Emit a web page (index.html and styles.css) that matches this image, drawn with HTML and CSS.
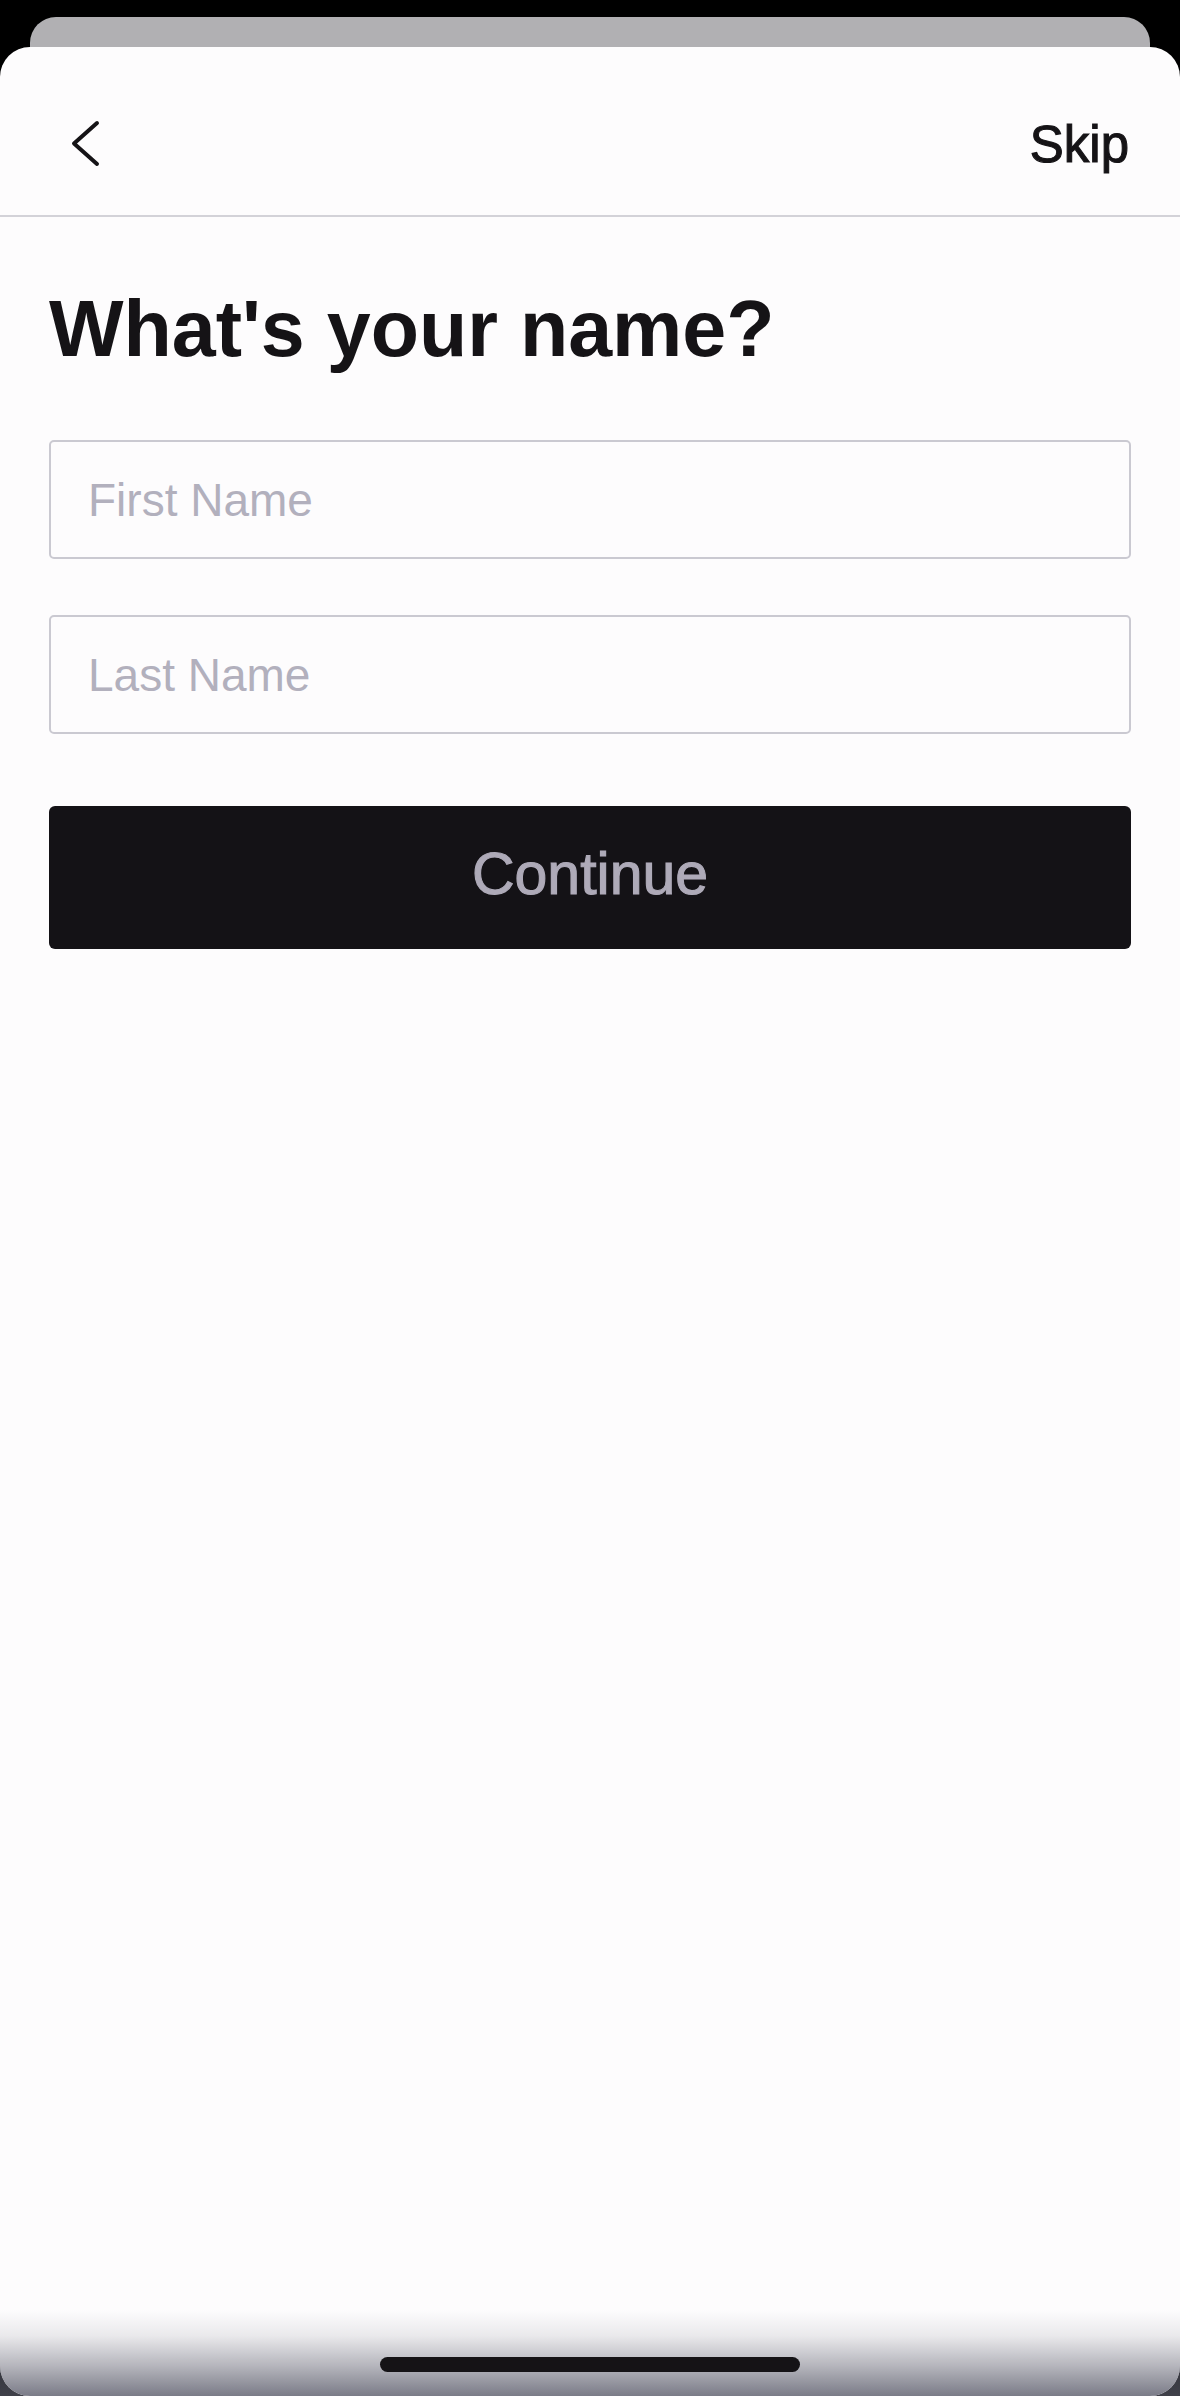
FILE: index.html
```html
<!DOCTYPE html>
<html lang="en">
<head>
  <meta charset="UTF-8" />
  <meta name="viewport" content="width=device-width, initial-scale=1" />
  <title>What's your name?</title>
  <link rel="stylesheet" href="styles.css">
</head>
<body>
  <div class="screen">
    <div class="card-behind"></div>
    <div class="sheet">
      <header class="topbar">
        <button class="back" type="button" aria-label="Back">
          <svg width="32" height="48" viewBox="0 0 32 48" fill="none">
            <path d="M27 3 L4 23.5 L27 44" stroke="#151316" stroke-width="4" stroke-linecap="round" stroke-linejoin="round"/>
          </svg>
        </button>
        <button class="skip" type="button">Skip</button>
      </header>

      <form class="content" id="nameForm">
        <h1>What's your name?</h1>
        <input class="field" type="text" name="first" placeholder="First Name" />
        <input class="field" type="text" name="last" placeholder="Last Name" />
        <button class="continue" type="submit">Continue</button>
      </form>

      <div class="home-area">
        <div class="home-indicator"></div>
      </div>
    </div>
  </div>
</body>
</html>
```

FILE: styles.css
```css
html, body {
  height: 100%;
  margin: 0;
}
body {
  background: linear-gradient(to bottom, #000 92%, #3f4049 100%);
  font-family: "Liberation Sans", Arial, sans-serif;
  color: #151316;
}
.screen {
  display: flex;
  flex-direction: column;
  height: 100%;
  padding-top: 17px;
  box-sizing: border-box;
}
.card-behind {
  height: 30px;
  margin: 0 30px;
  background: #b1b0b3;
  border-radius: 26px 26px 0 0;
  flex-shrink: 0;
}
.sheet {
  flex: 1;
  display: flex;
  flex-direction: column;
  background: #fdfcfd;
  border-radius: 30px;
  overflow: hidden;
}

/* top bar */
.topbar {
  height: 170px;
  box-sizing: border-box;
  padding: 26px 51px 0 70px;
  display: flex;
  justify-content: space-between;
  align-items: center;
  border-bottom: 2px solid #d3d2d8;
}
.topbar button {
  background: none;
  border: none;
  padding: 0;
  cursor: pointer;
  font-family: inherit;
  color: #151316;
}
.back svg {
  display: block;
}
.skip {
  font-size: 51px;
  -webkit-text-stroke: 1.1px #151316;
}

/* form */
.content {
  display: flex;
  flex-direction: column;
  padding: 0 49px;
}
h1 {
  margin: 65px 0 64px;
  font-size: 79px;
  line-height: 94px;
  font-weight: bold;
  letter-spacing: 0;
}
.field {
  height: 119px;
  box-sizing: border-box;
  border: 2px solid #cac9d1;
  border-radius: 5px;
  background: #fdfcfd;
  padding: 0 37px;
  font-family: inherit;
  font-size: 46px;
  color: #151316;
  outline: none;
}
.field::placeholder {
  color: #b2b0bd;
}
.field + .field {
  margin-top: 56px;
}
.continue {
  margin-top: 72px;
  height: 143px;
  box-sizing: border-box;
  padding: 0 0 8px;
  border: none;
  border-radius: 6px;
  background: #141216;
  color: #aeaab8;
  font-family: inherit;
  font-size: 59px;
  -webkit-text-stroke: 1.1px #aeaab8;
  cursor: pointer;
}

/* bottom fade with home indicator */
.home-area {
  margin-top: auto;
  height: 86px;
  box-sizing: border-box;
  padding-top: 47px;
  display: flex;
  justify-content: center;
  background: linear-gradient(to bottom,
    rgba(122, 123, 135, 0) 0%,
    rgba(122, 123, 135, 0.15) 30%,
    rgba(122, 123, 135, 0.55) 65%,
    rgba(122, 123, 135, 1) 100%);
}
.home-indicator {
  width: 420px;
  height: 15px;
  border-radius: 8px;
  background: #151316;
}
```
